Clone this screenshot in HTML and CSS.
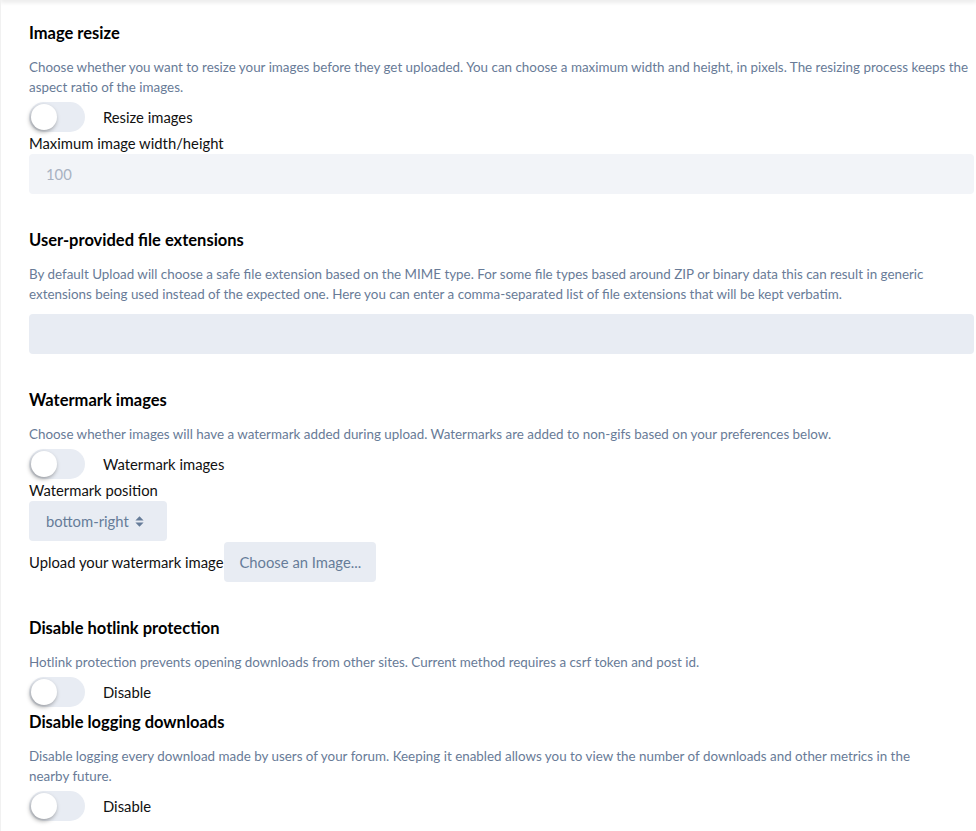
FILE: index.html
```
<!DOCTYPE html>
<html lang="en">
<head>
<meta charset="utf-8">
<title>Upload settings</title>
<link rel="stylesheet" href="styles.css">
</head>
<body>
<div class="topbar"></div>
<main class="page">
  <section class="setting setting--spaced">
    <h3 class="setting-title">Image resize</h3>
    <p class="help">Choose whether you want to resize your images before they get uploaded. You can choose a maximum width and height, in pixels. The resizing process keeps the aspect ratio of the images.</p>
    <div class="switch-row">
      <span class="switch"><span class="knob"></span></span>
      <span class="switch-label">Resize images</span>
    </div>
    <div class="label">Maximum image width/height</div>
    <input class="field field--disabled" type="text" placeholder="100" disabled>
  </section>

  <section class="setting setting--spaced">
    <h3 class="setting-title">User-provided file extensions</h3>
    <p class="help">By default Upload will choose a safe file extension based on the MIME type. For some file types based around ZIP or binary data this can result in generic extensions being used instead of the expected one. Here you can enter a comma-separated list of file extensions that will be kept verbatim.</p>
    <input class="field field--after-help" type="text">
  </section>

  <section class="setting setting--spaced">
    <h3 class="setting-title">Watermark images</h3>
    <p class="help">Choose whether images will have a watermark added during upload. Watermarks are added to non-gifs based on your preferences below.</p>
    <div class="switch-row">
      <span class="switch"><span class="knob"></span></span>
      <span class="switch-label">Watermark images</span>
    </div>
    <div class="label">Watermark position</div>
    <div class="select">
      <span>bottom-right</span>
      <svg class="caret" width="9" height="11" viewBox="0 0 9 11" aria-hidden="true"><path d="M4.5 0.3 L8.6 4.4 L0.4 4.4 Z M0.4 6.6 L8.6 6.6 L4.5 10.7 Z" fill="#667c99"/></svg>
    </div>
    <div class="upload-row">
      <span class="label label--inline">Upload your watermark image</span>
      <span class="button">Choose an Image...</span>
    </div>
  </section>

  <section class="setting">
    <h3 class="setting-title">Disable hotlink protection</h3>
    <p class="help">Hotlink protection prevents opening downloads from other sites. Current method requires a csrf token and post id.</p>
    <div class="switch-row">
      <span class="switch"><span class="knob"></span></span>
      <span class="switch-label">Disable</span>
    </div>
  </section>

  <section class="setting">
    <h3 class="setting-title">Disable logging downloads</h3>
    <p class="help help--narrow">Disable logging every download made by users of your forum. Keeping it enabled allows you to view the number of downloads and other metrics in the nearby future.</p>
    <div class="switch-row">
      <span class="switch"><span class="knob"></span></span>
      <span class="switch-label">Disable</span>
    </div>
  </section>
</main>
</body>
</html>
```

FILE: styles.css
```
* {
  box-sizing: border-box;
}

html, body {
  margin: 0;
  padding: 0;
  background: #fff;
}

body {
  font-family: "Segoe UI", Lato, "Noto Sans", sans-serif;
  color: #111;
  overflow: hidden;
  height: 831px;
  border-left: 1px solid #f1f1f1;
}

.topbar {
  height: 0;
  box-shadow: 0 0 5px 1px rgba(0, 0, 0, 0.22);
}

.page {
  padding: 23px 2px 0 28px;
  display: flex;
  flex-direction: column;
}

.setting {
  display: flex;
  flex-direction: column;
  align-items: flex-start;
  margin-bottom: 4px;
}

.setting--spaced {
  margin-bottom: 36px;
}

.setting-title {
  margin: 0 0 14px;
  font-size: 16.5px;
  line-height: 20px;
  font-weight: 700;
  color: #000;
}

.help {
  margin: 0 0 5px;
  font-size: 13.4px;
  line-height: 20px;
  color: #687b97;
}

.help--narrow {
  max-width: 915px;
}

.switch-row {
  display: flex;
  align-items: center;
  height: 30px;
  margin-bottom: 1px;
}

.switch {
  width: 56px;
  height: 30px;
  border-radius: 15px;
  background: #e8ecf3;
  display: flex;
  align-items: center;
  padding: 0 2px;
  margin-right: 18px;
}

.knob {
  width: 26px;
  height: 26px;
  border-radius: 50%;
  background: #fff;
  box-shadow: -1px 2px 4px rgba(0, 0, 0, 0.35);
}

.switch-label {
  font-size: 14.8px;
  line-height: 20px;
  color: #111;
}

.label {
  font-size: 14.8px;
  line-height: 20px;
  color: #111;
  margin-bottom: 1px;
}

.label--inline {
  margin-bottom: 0;
  margin-right: 1px;
}

.field {
  width: 100%;
  height: 40px;
  border: 0;
  border-radius: 4px;
  background: #e8ecf3;
  padding: 0 17px;
  font-family: inherit;
  font-size: 14.8px;
  color: #111;
  outline: none;
}

.field--disabled {
  background: #f2f4f8;
}

.field::placeholder {
  color: #a8b2c2;
  opacity: 1;
}

.field--after-help {
  margin-top: 5px;
}

.select {
  width: 138px;
  height: 40px;
  border-radius: 4px;
  background: #e8ecf3;
  display: flex;
  align-items: center;
  padding-left: 17px;
  gap: 6px;
  font-size: 14.8px;
  color: #667c99;
}

.caret {
  display: block;
}

.upload-row {
  display: flex;
  align-items: center;
  margin-top: 1px;
}

.button {
  height: 40px;
  display: flex;
  align-items: center;
  padding: 0 15px;
  border-radius: 4px;
  background: #e8ecf3;
  font-size: 14.8px;
  color: #667c99;
}
```
